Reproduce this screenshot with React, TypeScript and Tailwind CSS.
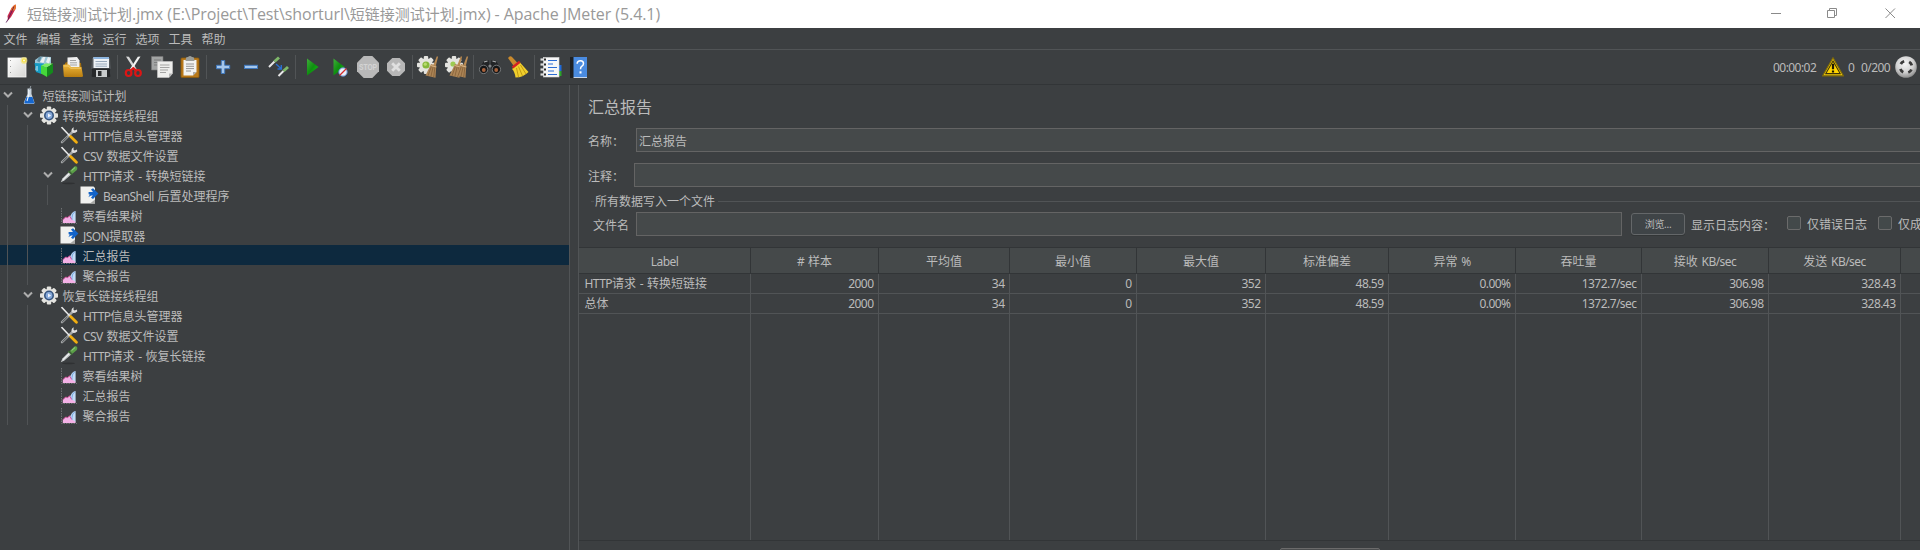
import React from "react";

/* Renders mixed text: Latin runs are set tighter than the CJK runs around them. */
function T({ children, cls = "" }: { children: string; cls?: string }) {
  const parts = children.split(/([\x20-\x7e]+)/).filter((p) => p !== "");
  return (
    <span className={`whitespace-pre ${cls}`}>
      {parts.map((p, i) =>
        /^[\x20-\x7e]+$/.test(p) ? (
          <span key={i} className="tracking-[-0.55px] [word-spacing:1.2px]">{p}</span>
        ) : (
          <span key={i}>{p}</span>
        ),
      )}
    </span>
  );
}

/* ---------- toolbar icons (28x28 slots) ---------- */

function Slot({ children }: { children?: React.ReactNode }) {
  return (
    <svg width="28" height="28" viewBox="0 0 28 28" className="block shrink-0">
      {children}
    </svg>
  );
}

function Sep() {
  return (
    <div className="flex h-6 w-[5px] shrink-0 justify-center">
      <div className="w-px bg-[#515456]" />
    </div>
  );
}

const Gear = ({ cx, cy, s = 1 }: { cx: number; cy: number; s?: number }) => (
  <g transform={`translate(${cx} ${cy}) scale(${s})`}>
    {[0, 45, 90, 135].map((a) => (
      <rect key={a} x="-2.2" y="-9" width="4.4" height="18" rx="1" fill="#e4e4e0" transform={`rotate(${a})`} />
    ))}
    <circle r="6.8" fill="#e4e4e0" />
  </g>
);

const Straw = ({ x }: { x: number }) => (
  <g transform={`translate(${x} 0)`}>
    <path d="M19.2 3.5 L20.6 3.5 L18 14 L15.5 13 Z" fill="#b98a52" />
    <path d="M13.5 11 L18.8 12.5 L18 24.8 L8 22.6 Z" fill="#ad8556" />
    <path d="M14 13 L10.5 22.8 M15.7 13.5 L13.4 23.6 M17.4 14 L16.2 24.2" stroke="#7d5a33" strokeWidth="0.7" />
    <path d="M13 12.5 L18.8 14" stroke="#d8b383" strokeWidth="1.1" />
  </g>
);

function Toolbar() {
  return (
    <div className="flex h-[34px] shrink-0 items-center pl-[3px]">
      <Slot>
        <defs>
          <linearGradient id="pg" x1="0" y1="0" x2="1" y2="1">
            <stop offset="0" stopColor="#ffffff" />
            <stop offset="1" stopColor="#d6d6d4" />
          </linearGradient>
          <linearGradient id="gold" x1="0" y1="0" x2="0" y2="1">
            <stop offset="0" stopColor="#f0b83a" />
            <stop offset="1" stopColor="#b87d10" />
          </linearGradient>
          <linearGradient id="grn" x1="0" y1="0" x2="1" y2="1">
            <stop offset="0" stopColor="#3fae3a" />
            <stop offset="0.5" stopColor="#0f8f10" />
            <stop offset="1" stopColor="#12c812" />
          </linearGradient>
          <radialGradient id="ball" cx="0.45" cy="0.35" r="0.65">
            <stop offset="0" stopColor="#f6f6f6" />
            <stop offset="0.6" stopColor="#d2d2d2" />
            <stop offset="1" stopColor="#8e8e8e" />
          </radialGradient>
        </defs>
        <rect x="5" y="5" width="18" height="19" fill="url(#pg)" stroke="#f8f8f8" strokeWidth="0.8" />
        <path d="M7.5 7v1M7.5 13v1M7.5 19v1" stroke="#888" strokeWidth="0.8" />
        <circle cx="21" cy="7.5" r="3.4" fill="#f3e67a" opacity="0.7" />
        <circle cx="21" cy="7.5" r="2" fill="#f4dd3a" />
        <circle cx="21" cy="7.5" r="0.9" fill="#fffef0" />
      </Slot>
      <Slot>
        <path d="M4 7 L9 3.5 L20 4 L20 12 L12 21 L4 17 Z" fill="#9cc5d6" />
        <path d="M9 9 L12 4 L14.5 4 L12.5 10 M15 9 L17 4 L19.5 5 L18 11" fill="#e9eef0" />
        <path d="M6 8 L8 4 L10.5 4 L8.5 9.5 Z" fill="#5f8fa5" />
        <path d="M3.5 10 L13 10.5 L13 19 L10.5 21 L5 19 Z" fill="#169bc4" />
        <path d="M5.5 13 L6.5 13 L6.5 18 L5.5 17.5 Z" fill="#d8f2fa" />
        <path d="M10 12.5 L16 14 L16 24 L10 20.5 Z" fill="#46d83a" />
        <path d="M16 14 L22 10.5 L22 19.5 L16 24 Z" fill="#148a1c" />
        <path d="M10 12.5 L14.5 10.5 L22 10.5 L16 14 Z" fill="#7deb62" />
      </Slot>
      <Slot>
        <path d="M6 10 L10 8 L22 10 L23 20 L6 20 Z" fill="#a36f10" />
        <path d="M8.5 4.5 L18 4 L20.5 7.5 L20.5 15 L8.5 15 Z" fill="#f0f0f0" />
        <path d="M11 7.5h6M11 9.8h7M11 12h7" stroke="#9a9a9a" strokeWidth="0.9" />
        <path d="M4 12.5 Q4 11.5 5 11.5 L10 11.5 L12 14 L22.5 14 L24 23 Q24 24 22.5 24 L6 24 Q5 24 4.8 23 Z" fill="url(#gold)" />
        <path d="M5 13 L9.5 13 L11.5 15.2 L22 15.2" stroke="#f8d67e" strokeWidth="0.8" fill="none" />
      </Slot>
      <Slot>
        <path d="M5 5 H23 L24 20 L23 24 H5 L4 20 Z" fill="#55595c" />
        <rect x="6.5" y="4" width="15.5" height="11" fill="#eef2f6" />
        <path d="M6.5 4h15.5v2h-15.5z" fill="#8db5df" />
        <path d="M8.5 8.5h11.5M8.5 11h11.5M8.5 13.2h11.5" stroke="#8fa2b5" strokeWidth="0.9" />
        <rect x="4.5" y="15.5" width="19" height="8.5" rx="1" fill="#26282a" />
        <rect x="9" y="17" width="11" height="7" fill="#c9cccd" />
        <rect x="11" y="18" width="3.5" height="5" fill="#2b2d2f" />
      </Slot>
      <Sep />
      <Slot>
        <path d="M6 3.5 L9 3.8 L17.5 17.5 L15 17.8 Z" fill="#d7d7d7" />
        <path d="M20.5 3.5 L17.8 3.8 L9 17.5 L11.5 17.8 Z" fill="#f4f4f4" />
        <g fill="none" stroke="#dd1515" strokeWidth="2.2">
          <ellipse cx="8.6" cy="20" rx="2.8" ry="3" />
          <ellipse cx="18" cy="20" rx="2.8" ry="3" />
          <path d="M10.5 17.6 L13.3 15.2 L16.2 17.6" />
        </g>
      </Slot>
      <Slot>
        <path d="M3.5 3.5 H15 V17 H3.5 Z" fill="#a2a4a4" stroke="#777" strokeWidth="0.6" />
        <path d="M6 7h7M6 9.5h5M6 12h4" stroke="#7a7c7c" strokeWidth="0.9" />
        <path d="M9.5 8.5 H24.5 V20.5 L21 24.5 H9.5 Z" fill="#eeeeec" stroke="#c8c8c8" strokeWidth="0.6" />
        <path d="M12 12h9.5M12 14.5h9.5M12 17h8M12 19.5h6" stroke="#9b9b9b" strokeWidth="0.9" />
        <path d="M24.5 20.5 L21 20.5 L21 24.5 Z" fill="#b5b5b5" />
      </Slot>
      <Slot>
        <rect x="5" y="5" width="18" height="19.5" rx="1" fill="#b9791a" stroke="#8c5a0d" strokeWidth="0.8" />
        <path d="M7.5 7 H20.5 V19 L17 22.5 H7.5 Z" fill="#f3f3f1" />
        <path d="M10 5 Q10 4 12 4 Q14 2 16 4 Q18 4 18 5 L18.5 8 H9.5 Z" fill="#9b9d98" />
        <path d="M10 11h8M10 13.3h8M10 15.6h8M10 18h5" stroke="#8b8b8b" strokeWidth="0.9" />
        <path d="M20.5 19 L17 19 L17 22.5 Z" fill="#adadad" />
      </Slot>
      <Sep />
      <Slot>
        <path d="M12.3 7.5 H15.7 V12.3 H20.7 V15.7 H15.7 V20.5 H12.3 V15.7 H7.5 V12.3 H12.3 Z" fill="#a5c7ec" stroke="#3f78bd" strokeWidth="1" />
      </Slot>
      <Slot>
        <rect x="7.5" y="12.3" width="13" height="3.2" fill="#a5c7ec" stroke="#3f78bd" strokeWidth="1" />
      </Slot>
      <Slot>
        <path d="M4 14 L9.5 8.5" stroke="#e8e8e8" strokeWidth="2" />
        <path d="M9.5 8.5 L14 4.5" stroke="#7fb86a" strokeWidth="3" />
        <path d="M13.5 23 L18.5 18" stroke="#e8e8e8" strokeWidth="2" />
        <path d="M18.5 18 L23 14" stroke="#7fb86a" strokeWidth="3" />
        <path d="M11 11 L16 15.5 M16.3 12 V16 H12.5" stroke="#2a6fd0" strokeWidth="1.4" fill="none" />
      </Slot>
      <Sep />
      <Slot>
        <path d="M9 5.5 L20.5 14 L9 22.5 Z" fill="url(#grn)" />
      </Slot>
      <Slot>
        <path d="M7.5 5.5 L18.5 14 L7.5 22.5 Z" fill="url(#grn)" />
        <circle cx="17" cy="19" r="4.2" fill="#eaf0fa" stroke="#5d86c8" strokeWidth="1" />
        <path d="M13.5 22.5 L20.5 15.5" stroke="#d42a2a" strokeWidth="1.3" />
      </Slot>
      <Slot>
        <path d="M9.7 3 H18.3 L25 9.7 V18.3 L18.3 25 H9.7 L3 18.3 V9.7 Z" fill="#b9b9b9" />
        <text x="14" y="17.3" textAnchor="middle" fontSize="8.6" fontWeight="700" textLength="18" lengthAdjust="spacingAndGlyphs" fill="#d4d4d4" fontFamily="Liberation Sans, sans-serif">STOP</text>
      </Slot>
      <Slot>
        <path d="M10.3 5 H17.7 L23 10.3 V17.7 L17.7 23 H10.3 L5 17.7 V10.3 Z" fill="#b7b7b7" />
        <path d="M10.2 10.2 L17.8 17.8 M17.8 10.2 L10.2 17.8" stroke="#e0e0e0" strokeWidth="2.8" />
      </Slot>
      <Sep />
      <Slot>
        <Gear cx={11} cy={12} />
        <circle cx="11" cy="12" r="3.6" fill="#86b83d" />
        <circle cx="10.3" cy="11.2" r="1.6" fill="#b7dc6f" />
        <Straw x={2.5} />
      </Slot>
      <Slot>
        <Gear cx={11} cy={12} />
        <circle cx="10" cy="11" r="2.6" fill="#9ccb52" />
        <Straw x={-1.5} />
        <Straw x={4.5} />
      </Slot>
      <Sep />
      <Slot>
        <path d="M8 8 L12.5 7 L13.5 12 L12 18 L4 17 L6 11 Z" fill="#222426" />
        <path d="M20 8 L15.5 7 L14.5 12 L16 18 L24 17 L22 11 Z" fill="#222426" />
        <path d="M8 9 L11.5 8 M16.5 8 L20 9" stroke="#aeb0b2" strokeWidth="1.2" />
        <circle cx="7.6" cy="16.4" r="4.2" fill="#151617" stroke="#7d8082" strokeWidth="0.9" />
        <circle cx="20.4" cy="16.4" r="4.2" fill="#151617" stroke="#7d8082" strokeWidth="0.9" />
        <circle cx="7.8" cy="17" r="1.9" fill="#a8623c" />
        <circle cx="20.2" cy="17" r="1.9" fill="#a8623c" />
        <circle cx="14" cy="13" r="1.6" fill="#85888a" />
      </Slot>
      <Slot>
        <path d="M4 5 Q6 2 8.5 4.5 L14.5 11 L10.5 14 Z" fill="#c98a2d" />
        <path d="M11 13.5 L16 9.5 L24.5 19 Q19 24.5 11.5 24.5 Q10.5 18 8 16 Z" fill="#f0cf2c" />
        <path d="M12.5 15 L14.5 24 M14.5 13.5 L18.5 23 M16.5 12 L22 21" stroke="#bb9312" strokeWidth="0.9" />
        <path d="M8.5 14.5 L15.8 8.8" stroke="#d42222" strokeWidth="2.4" />
      </Slot>
      <Sep />
      <Slot>
        <path d="M21 12 h3.5 v6 h-3.5z" fill="#1e6ad8" />
        <path d="M21 18 h3.5 v5 h-3.5z" fill="#2aa32a" />
        <rect x="6.5" y="4.5" width="15.5" height="19.5" fill="#f7f7f7" stroke="#dadada" strokeWidth="0.6" />
        {[7, 12, 17, 22].map((y) => (
          <g key={y}>
            <rect x="3.5" y={y - 1.6} width="4" height="2.2" fill="#dddddd" />
            <rect x="7" y={y - 1.5} width="2" height="2" fill="#2b2b2b" />
          </g>
        ))}
        <path d="M11 7.5h9M11 11h5M11 14.5h9M11 18h6M11 21.5h9" stroke="#2b6cd4" strokeWidth="1.1" />
      </Slot>
      <Slot>
        <rect x="5" y="4" width="4" height="21" fill="#1d2024" />
        <rect x="8.5" y="4" width="13.5" height="20" fill="#4a8be0" />
        <path d="M8.5 24 h13.5 v1 h-13.5z" fill="#c8d6ea" />
        <path d="M12.1 10.8 Q12.3 7.8 15.5 7.8 Q18.5 7.8 18.5 10.6 Q18.5 12.4 16.7 13.4 Q15.5 14.2 15.5 16.2" fill="none" stroke="#fff" strokeWidth="1.5" />
        <rect x="14.5" y="18.3" width="2" height="2.2" fill="#fff" />
      </Slot>
      <div className="ml-auto flex h-full items-center pr-[3px]">
        <T cls="w-[49px] pt-[2px]">00:00:02</T>
        <svg width="22" height="20" viewBox="0 0 22 20" className="mr-[4px] block">
          <path d="M11 0.8 L21.4 18.8 H0.6 Z" fill="#f2cb0c" stroke="#7d690a" strokeWidth="1.2" />
          <path d="M11 4 L18.2 16.6 H3.8 Z" fill="#ffd400" stroke="#3c330a" strokeWidth="1.1" />
          <path d="M11 6.8v5.4M11 13.4v2" stroke="#1c1804" strokeWidth="2.2" />
        </svg>
        <T cls="w-[13px] pt-[2px]">0</T>
        <T cls="w-[34px] pt-[2px]">0/200</T>
        <svg width="22" height="22" viewBox="0 0 22 22" className="block">
          <circle cx="11" cy="11" r="10.8" fill="url(#ball)" />
          <circle cx="11" cy="11" r="6" fill="none" stroke="#3a3a3a" strokeWidth="2.8" strokeDasharray="4.2 5.225" strokeDashoffset="-2.6" />
        </svg>
      </div>
    </div>
  );
}

/* ---------- tree ---------- */

const IFlask = () => (
  <svg width="18" height="20" viewBox="0 0 18 20" className="block">
    <path d="M7.5 3.5 H11.5 V9 L14.5 17.5 Q14.6 19 13 19 H5 Q3.6 19 3.8 17.5 L7.5 9 Z" fill="#c6d2dc" />
    <path d="M6.4 12 L12.4 12 L14.2 17.6 Q14.2 18.6 13 18.6 H5.4 Q4.2 18.6 4.4 17.6 Z" fill="#1667cf" />
    <path d="M8.8 4.5 V10 L7 16" stroke="#f4f8fb" strokeWidth="1.1" fill="none" />
    <path d="M9.5 5 L10.8 1" stroke="#9aa5ad" strokeWidth="0.9" />
  </svg>
);
const IGear = () => (
  <svg width="18" height="20" viewBox="0 0 18 20" className="block">
    <Gear cx={9} cy={10.5} />
    <circle cx="9" cy="10.5" r="5" fill="#35547f" />
    <circle cx="9" cy="10.5" r="3.4" fill="#86a9da" />
    <path d="M8 8.4 L11.2 10.5 L8 12.6 Z" fill="#eef4fd" />
  </svg>
);
const ITools = () => (
  <svg width="18" height="20" viewBox="0 0 18 20" className="block">
    <path d="M2 17.2 L12.8 6.6" stroke="#a4a7a8" strokeWidth="2.4" strokeLinecap="round" />
    <path d="M2.2 17 L7.4 12" stroke="#4a4d4f" strokeWidth="1" />
    <path d="M13.8 2.2 Q11 3.6 11.6 6.8 Q13.4 9.2 17.2 6.4 L17 4.6 L14.6 5.6 L13.4 4.6 Z" fill="#dedede" />
    <path d="M0.8 2.4 L2.2 1.8 L10.4 10.6 L9.4 11.4 Z" fill="#ededed" />
    <path d="M10.6 11.6 L16.4 17.2" stroke="#f0ae10" strokeWidth="2.8" strokeLinecap="round" />
  </svg>
);
const IDropper = () => (
  <svg width="18" height="20" viewBox="0 0 18 20" className="block">
    <ellipse cx="8.5" cy="18.4" rx="6.5" ry="0.8" fill="#2f3133" />
    <path d="M0.8 17.2 L2.4 13.6 L9 7 L11.2 9.4 L4.4 15.6 Z" fill="#c8cccd" />
    <path d="M3 14.6 L9.6 8.2" stroke="#ffffff" strokeWidth="1" />
    <path d="M8.4 6.2 L12 9.8" stroke="#3f6b35" strokeWidth="1.6" />
    <path d="M9.8 6 L14.4 1.6 Q16.4 0.8 17.2 2.4 Q17.6 4 16.6 5.2 L12.4 8.8 Z" fill="#5aa047" />
    <path d="M11.6 5.6 L15.2 2.4" stroke="#a5d790" strokeWidth="1" />
  </svg>
);
const IScript = () => (
  <svg width="19" height="20" viewBox="0 0 19 20" className="block">
    <path d="M0.5 1.5 H13.5 L15 3 V18.5 H0.5 Z" fill="#f1f1ef" />
    <path d="M15 14.5 L15 18.5 L10 18.5 Z" fill="#a9a9a7" />
    <path d="M8.6 7 H13 L11 4.4 L13 3.2 L18.4 8.6 L13 14 L11 12.8 L12.8 10.2 Q10.8 10.4 8.2 12.2 Q9.6 10.6 9.6 9.2 H8.6 Z" fill="#1464c8" />
  </svg>
);
const IChart = () => (
  <svg width="18" height="20" viewBox="0 0 18 20" className="block">
    <path d="M1.5 3 V18.5 H17" stroke="#6e7173" strokeWidth="1" strokeDasharray="1.5 1" fill="none" />
    <path d="M8 17.5 Q8.6 12 11 10 Q12 6.8 15.6 6 V17.5 Z" fill="#c3dcf6" />
    <path d="M12 16 Q11.4 8.4 15 6.8" stroke="#6fa2dc" strokeWidth="0.9" fill="none" />
    <path d="M2.8 18 V14.8 L5.6 12 L7.6 12.6 L9.6 10.8 L11.6 14.4 L15.4 16.6 V18 Z" fill="#f3b1e6" />
    <path d="M2.8 14.8 L5.6 12 L7.6 12.6 L9.6 10.8 L11.6 14.4" stroke="#c8458f" strokeWidth="0.9" fill="none" />
  </svg>
);

type Kind = "flask" | "gear" | "tools" | "dropper" | "script" | "chart";
const ICONS: Record<Kind, () => React.ReactElement> = {
  flask: IFlask, gear: IGear, tools: ITools, dropper: IDropper, script: IScript, chart: IChart,
};

type Node = { d: number; k: Kind; t: string; open?: boolean; sel?: boolean };
const NODES: Node[] = [
  { d: 0, k: "flask", t: "短链接测试计划", open: true },
  { d: 1, k: "gear", t: "转换短链接线程组", open: true },
  { d: 2, k: "tools", t: "HTTP信息头管理器" },
  { d: 2, k: "tools", t: "CSV 数据文件设置" },
  { d: 2, k: "dropper", t: "HTTP请求 - 转换短链接", open: true },
  { d: 3, k: "script", t: "BeanShell 后置处理程序" },
  { d: 2, k: "chart", t: "察看结果树" },
  { d: 2, k: "script", t: "JSON提取器" },
  { d: 2, k: "chart", t: "汇总报告", sel: true },
  { d: 2, k: "chart", t: "聚合报告" },
  { d: 1, k: "gear", t: "恢复长链接线程组", open: true },
  { d: 2, k: "tools", t: "HTTP信息头管理器" },
  { d: 2, k: "tools", t: "CSV 数据文件设置" },
  { d: 2, k: "dropper", t: "HTTP请求 - 恢复长链接" },
  { d: 2, k: "chart", t: "察看结果树" },
  { d: 2, k: "chart", t: "汇总报告" },
  { d: 2, k: "chart", t: "聚合报告" },
];

function TreeRow({ n }: { n: Node }) {
  const Icon = ICONS[n.k];
  const latin = /^[A-Z]/.test(n.t);
  return (
    <div className={`flex h-5 items-center ${n.sel ? "bg-[#0d293e]" : ""}`}>
      {Array.from({ length: n.d }, (_, i) => (
        <div key={i} className="h-5 w-5 shrink-0 pl-[7px]">
          <div className="h-5 w-px bg-[#505355]" />
        </div>
      ))}
      <div className="flex w-[20px] shrink-0 pl-[2.5px]">
        {n.open && (
          <svg width="10" height="8" viewBox="0 0 10 8" className="block">
            <path d="M1 1.5 L5 5.5 L9 1.5" fill="none" stroke="#adadad" strokeWidth="2" />
          </svg>
        )}
      </div>
      <div className="w-[22px] shrink-0"><Icon /></div>
      <T cls={latin ? "pl-px pt-[3px]" : "pl-[0.5px] pt-[3px]"}>{n.t}</T>
    </div>
  );
}

/* ---------- table ---------- */

const COLS: { h: string; w: string; v: [string, string] }[] = [
  { h: "Label", w: "w-[172px]", v: ["HTTP请求 - 转换短链接", "总体"] },
  { h: "# 样本", w: "w-[128px]", v: ["2000", "2000"] },
  { h: "平均值", w: "w-[131px]", v: ["34", "34"] },
  { h: "最小值", w: "w-[127px]", v: ["0", "0"] },
  { h: "最大值", w: "w-[129px]", v: ["352", "352"] },
  { h: "标准偏差", w: "w-[123px]", v: ["48.59", "48.59"] },
  { h: "异常 %", w: "w-[127px]", v: ["0.00%", "0.00%"] },
  { h: "吞吐量", w: "w-[126px]", v: ["1372.7/sec", "1372.7/sec"] },
  { h: "接收 KB/sec", w: "w-[127px]", v: ["306.98", "306.98"] },
  { h: "发送 KB/sec", w: "w-[132px]", v: ["328.43", "328.43"] },
  { h: "", w: "w-[20px]", v: ["", ""] },
];

function Table() {
  return (
    <div className="flex h-[294px] shrink-0 border-y border-[#323537]">
      {COLS.map((c, i) => (
        <div key={i} className={`flex shrink-0 flex-col ${c.w}`}>
          <div className="flex h-[26px] items-center justify-center border-b border-r border-[#323537] bg-[#45494a] pt-[3px]">
            <T>{c.h}</T>
          </div>
          <div className="flex-1 border-r border-[#515456]">
            {c.v.map((v, j) => (
              <div
                key={j}
                className={`flex h-5 items-center border-b border-[#515456] pt-px ${i === 0 ? "pl-[5.5px]" : "justify-end pr-[4.5px]"}`}
              >
                <T>{v}</T>
              </div>
            ))}
          </div>
        </div>
      ))}
    </div>
  );
}

const field = "border border-[#646464] bg-[#45494a]";

export default function App() {
  return (
    <div className="flex h-[550px] w-[1920px] flex-col overflow-hidden bg-[#3c3f41] font-['Noto_Sans','Noto_Sans_CJK_SC',sans-serif] text-[12px] leading-[16px] text-[#bbbbbb]">
      <div className="flex h-[28px] shrink-0 items-center bg-white text-[#999999]">
        <svg width="27" height="28" viewBox="0 0 27 28" className="block shrink-0">
          <path d="M15.5 4.5 Q16.5 6 15.5 9 L11 17 L8 20.5 L7.5 16 L11 9 Q13.5 5 15.5 4.5 Z" fill="#c92a4c" />
          <path d="M15.5 4.5 Q16.5 6 15 10 L11.5 11 L11 9 Q13.5 5 15.5 4.5 Z" fill="#ee7a25" />
          <path d="M14 6.5 L8 19.5 L6.2 22.5" stroke="#5b1a55" strokeWidth="0.9" fill="none" />
        </svg>
        <div className="flex items-baseline whitespace-pre font-['Open_Sans','Noto_Sans_CJK_SC',sans-serif] text-[15px] leading-[20px]">
          <span>短链接测试计划</span>
          <span className="text-[16px] tracking-[-0.07px]">{".jmx (E:\\Project\\Test\\shorturl\\"}</span>
          <span>短链接测试计划</span>
          <span className="text-[16px] tracking-[-0.07px]">.jmx) - Apache JMeter (5.4.1)</span>
        </div>
        <svg width="150" height="28" viewBox="0 0 150 28" className="ml-auto block" fill="none" stroke="#8a8a8a">
          <path d="M1 13.5 H11" />
          <path d="M57.5 10.5 H64.5 V17.5 H57.5 Z M59.5 10.5 V8.5 H66.5 V15.5 H64.5" />
          <path d="M115.5 8.5 L125 18 M125 8.5 L115.5 18" />
        </svg>
      </div>
      <div className="flex h-[22px] shrink-0 items-center gap-[9px] border-b border-[#515456] pl-[3.5px] pt-[2px]">
        {["文件", "编辑", "查找", "运行", "选项", "工具", "帮助"].map((m) => (
          <span key={m} className="w-6 whitespace-nowrap">{m}</span>
        ))}
      </div>
      <Toolbar />
      <div className="flex min-h-0 flex-1 border-t border-[#323537]">
        <div className="w-[570px] shrink-0 border-r border-[#515456]">
          {NODES.map((n, i) => <TreeRow key={i} n={n} />)}
        </div>
        <div className="ml-[8px] flex min-w-0 flex-1 flex-col border-l border-[#515456]">
          <div className="flex h-[43px] shrink-0 items-center pl-[9px] text-[16px] leading-[20px]">汇总报告</div>
          <div className="flex h-[35px] shrink-0 items-start">
            <T cls="w-[57px] shrink-0 pl-[9px] pt-[6px]">名称：</T>
            <div className={`h-6 w-[1300px] shrink-0 pl-[2px] pt-[5px] ${field}`}><T>汇总报告</T></div>
          </div>
          <div className="flex h-[30px] shrink-0 items-start">
            <T cls="w-[55px] shrink-0 pl-[9px] pt-[6px]">注释：</T>
            <div className={`h-6 w-[1300px] shrink-0 ${field}`} />
          </div>
          <div className="flex h-[19px] shrink-0 items-center pl-[12px]">
            <div className="mb-[3px] h-px w-[3px] bg-[#515456]" />
            <T cls="mb-[2px] ml-px w-[123px]">所有数据写入一个文件</T>
            <div className="mb-[3px] h-px flex-1 bg-[#515456]" />
          </div>
          <div className="flex h-[35px] shrink-0 items-start">
            <T cls="w-[57px] shrink-0 pl-[14px] pt-[6px]">文件名</T>
            <div className={`h-6 w-[986px] shrink-0 ${field}`} />
            <div className="ml-[9px] mt-px flex h-[22px] w-[54px] shrink-0 items-center justify-center rounded-[3px] border border-[#646769] bg-[#3f4447] text-[10px] tracking-[-0.3px] shadow-[0_1px_0_#333637]">
              浏览...
            </div>
            <T cls="ml-[6px] w-[96px] shrink-0 pt-[6px]">显示日志内容：</T>
            <div className="mt-[4px] h-[14px] w-[14px] shrink-0 rounded-[2px] border border-[#6b6b6b] bg-[#43494a]" />
            <T cls="ml-[6px] w-[71px] shrink-0 pt-[5px]">仅错误日志</T>
            <div className="mt-[4px] h-[14px] w-[14px] shrink-0 rounded-[2px] border border-[#6b6b6b] bg-[#43494a]" />
            <T cls="ml-[6px] shrink-0 pt-[5px]">仅成功日志</T>
          </div>
          <Table />
          <div className="min-h-0 flex-1 overflow-hidden pl-[701px] pt-[7px]">
            <div className="h-4 w-[100px] rounded-[2px] border border-[#6b6b6b] bg-[#4b4d4e]" />
          </div>
        </div>
      </div>
    </div>
  );
}
